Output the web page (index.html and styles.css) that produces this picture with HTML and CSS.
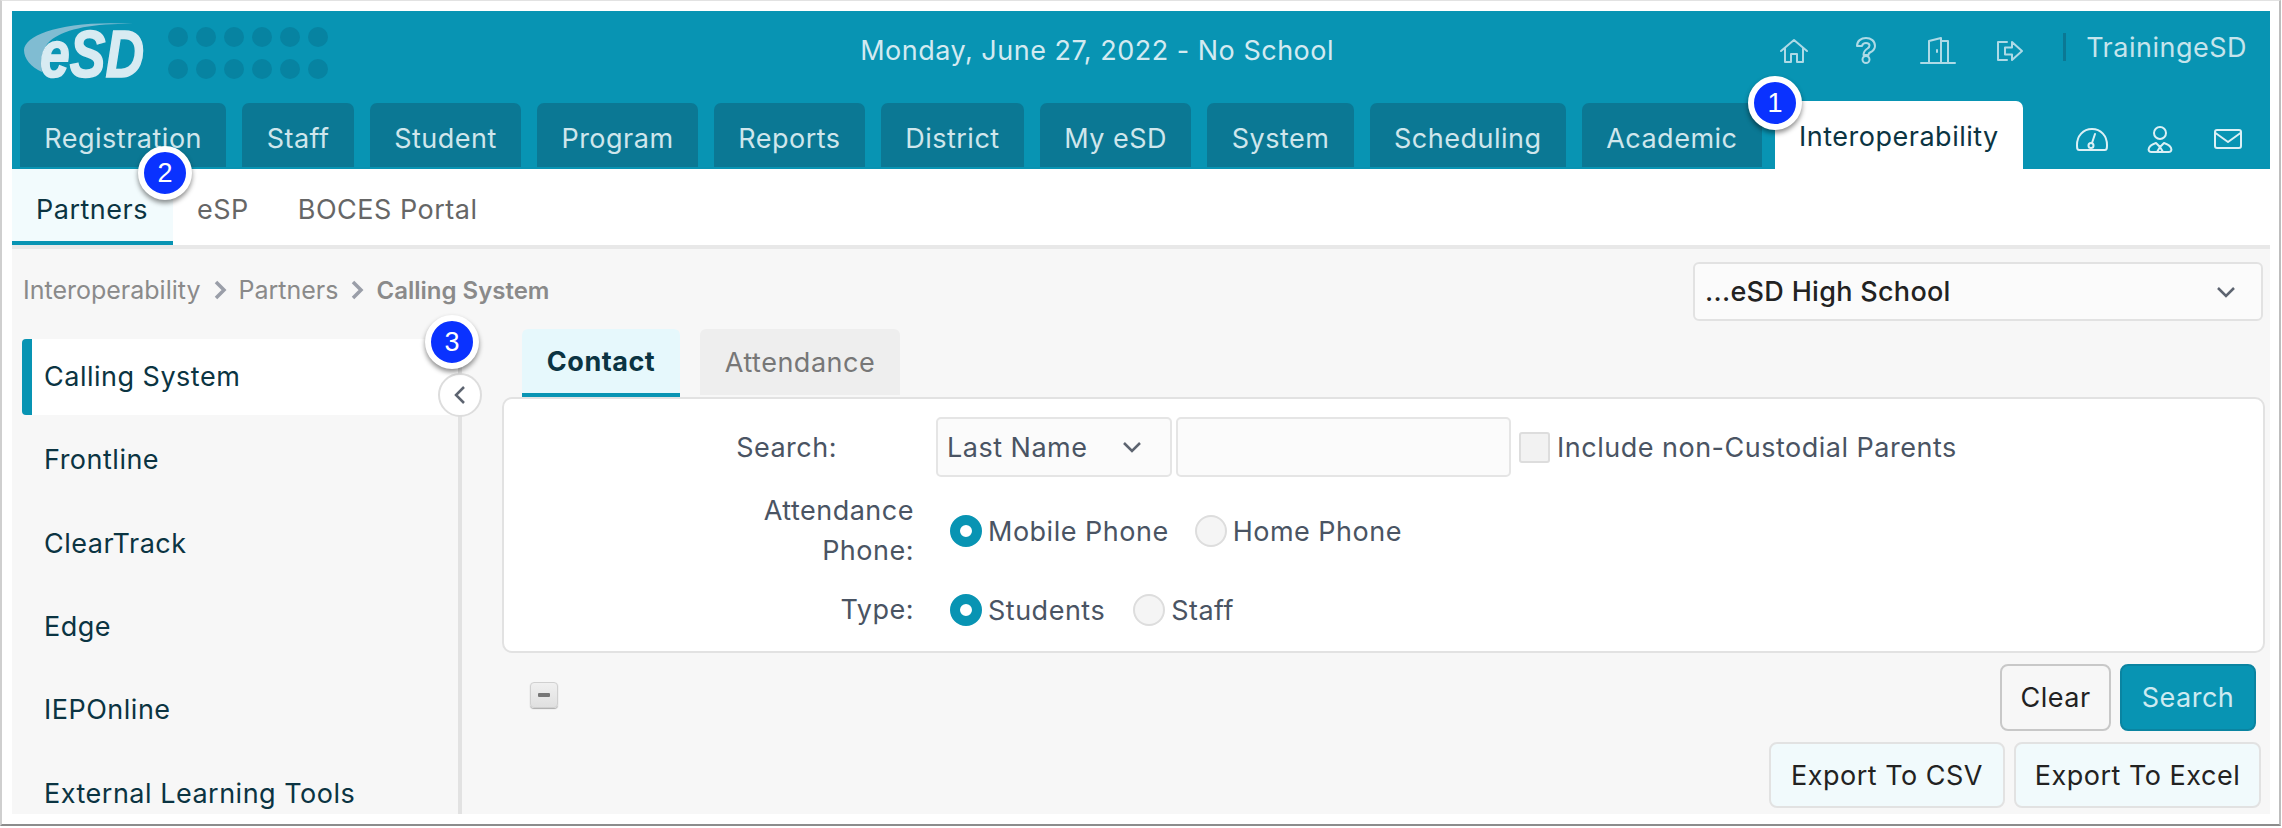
FILE: index.html
```html
<!DOCTYPE html>
<html lang="en">
<head>
    <meta charset="UTF-8">
    <title>Calling System</title>
    <link rel="stylesheet" href="styles.css">
</head>
<body>
<div class="frame">
    <header class="top-header">
        <div class="header-top">
            <div class="logo">
                <svg width="130" height="72" viewBox="0 0 130 72">
                    <path class="logo-swoosh" d="M19 55 C8 50 1 42 1 33 C2 18 40 3 110 7 C70 6 40 12 27 24 C20 30 17 42 19 55 Z"/>
                </svg>
                <span class="logo-text">eSD</span>
            </div>
            <div class="dots">
                <span></span><span></span><span></span><span></span><span></span><span></span>
                <span></span><span></span><span></span><span></span><span></span><span></span>
            </div>
            <div class="today">Monday, June 27, 2022 - No School</div>
            <div class="top-icons">
                <svg class="line-icon" width="28" height="24" viewBox="0 0 28 24"><path d="M1 12 L14 1 L27 12 M5 9 V23 H11 V15 H17 V23 H23 V9"/></svg>
                <svg class="line-icon" width="20" height="27" viewBox="0 0 20 27"><path d="M1 9 C1 4 5 1 10 1 C15 1 19 4 19 9 C19 12 17 14 14 15.500 C13 16 12.500 17 12.500 18 H7.500 C7.500 15 9 13 11.500 11.500 C13 10.500 13.500 10 13.500 8.500 C13.500 7 12 6 10 6 C8 6 6.500 7 6 9 Z"/><circle cx="10" cy="22.500" r="3.500"/></svg>
                <svg class="line-icon" width="34" height="27" viewBox="0 0 34 27"><path d="M0 26 H34 M8 26 V4 L20 1 V26 M20 4 H27 V26 M16 13 V15"/></svg>
                <svg class="line-icon" width="26" height="20" viewBox="0 0 26 20"><path d="M10 1 H1 V19 H10 M8 6.500 H15 V1 L25 10 L15 19 V13.500 H8 Z"/></svg>
            </div>
            <div class="divider"></div>
            <div class="user">TrainingeSD</div>
        </div>
        <div class="header-tabs">
            <nav class="main-tabs">
                <a class="main-tab">Registration</a>
                <a class="main-tab">Staff</a>
                <a class="main-tab">Student</a>
                <a class="main-tab">Program</a>
                <a class="main-tab">Reports</a>
                <a class="main-tab">District</a>
                <a class="main-tab">My eSD</a>
                <a class="main-tab">System</a>
                <a class="main-tab">Scheduling</a>
                <a class="main-tab">Academic</a>
                <a class="main-tab active">Interoperability</a>
            </nav>
            <div class="tab-icons">
                <svg class="line-icon bright" width="32" height="23" viewBox="0 0 32 23"><path d="M3 22 H29 C31 22 31 20 31 17 C31 8 25 1 16 1 C7 1 1 8 1 17 C1 20 1 22 3 22 Z M16 15 L19 6"/><circle cx="15" cy="17.500" r="2.500"/></svg>
                <svg class="line-icon bright" width="24" height="27" viewBox="0 0 24 27"><circle cx="12" cy="7" r="6"/><path d="M3 26 C1 26 0 24 1 22 C2 19 5 18 8 17 L12 21 L16 17 C19 18 22 19 23 22 C24 24 23 26 21 26 Z M12 21 L9 26 M12 21 L15 26"/></svg>
                <svg class="line-icon bright" width="28" height="20" viewBox="0 0 28 20"><rect x="1" y="1" width="26" height="18" rx="2"/><path d="M1.500 4 L14 13 L26.500 4"/></svg>
            </div>
        </div>
    </header>

    <nav class="sub-nav">
        <a class="sub-tab active">Partners</a>
        <a class="sub-tab">eSP</a>
        <a class="sub-tab">BOCES Portal</a>
    </nav>

    <div class="content">
        <div class="crumb-row">
            <div class="crumbs">
                <span>Interoperability</span>
                <svg class="crumb-sep" width="16" height="22" viewBox="0 0 16 22"><path d="M4 3 L12 11 L4 19"/></svg>
                <span>Partners</span>
                <svg class="crumb-sep" width="16" height="22" viewBox="0 0 16 22"><path d="M4 3 L12 11 L4 19"/></svg>
                <strong>Calling System</strong>
            </div>
            <div class="school-select">
                <span>...eSD High School</span>
                <svg class="chevron" width="22" height="14" viewBox="0 0 22 14"><path d="M3 3 L11 11 L19 3"/></svg>
            </div>
        </div>

        <div class="columns">
            <aside class="side-menu">
                <a class="side-item active">Calling System</a>
                <a class="side-item">Frontline</a>
                <a class="side-item">ClearTrack</a>
                <a class="side-item">Edge</a>
                <a class="side-item">IEPOnline</a>
                <a class="side-item">External Learning Tools</a>
                <div class="collapse-btn">
                    <svg width="14" height="22" viewBox="0 0 14 22"><path d="M11 3 L3 11 L11 19"/></svg>
                </div>
            </aside>

            <main class="main-col">
                <div class="inner-tabs">
                    <a class="inner-tab active">Contact</a>
                    <a class="inner-tab">Attendance</a>
                </div>
                <section class="panel">
                    <div class="form-row search-row">
                        <label class="search-label">Search:</label>
                        <div class="field-select">
                            <span>Last Name</span>
                            <svg class="chevron" width="22" height="14" viewBox="0 0 22 14"><path d="M3 3 L11 11 L19 3"/></svg>
                        </div>
                        <div class="field-input"></div>
                        <span class="checkbox"></span>
                        <span class="opt-text">Include non-Custodial Parents</span>
                    </div>
                    <div class="form-row phone-row">
                        <label class="form-label">Attendance<br>Phone:</label>
                        <span class="radio on"></span>
                        <span class="opt-text">Mobile Phone</span>
                        <span class="radio second"></span>
                        <span class="opt-text">Home Phone</span>
                    </div>
                    <div class="form-row type-row">
                        <label class="form-label">Type:</label>
                        <span class="radio on"></span>
                        <span class="opt-text">Students</span>
                        <span class="radio second"></span>
                        <span class="opt-text">Staff</span>
                    </div>
                </section>
                <div class="actions">
                    <span class="minus-btn"><i></i></span>
                    <button class="btn btn-clear">Clear</button>
                    <button class="btn btn-search">Search</button>
                </div>
                <div class="exports">
                    <button class="btn btn-export">Export To CSV</button>
                    <button class="btn btn-export">Export To Excel</button>
                </div>
            </main>
        </div>
    </div>

    <span class="badge badge-1">1</span>
    <span class="badge badge-2">2</span>
    <span class="badge badge-3">3</span>
</div>
</body>
</html>
```

FILE: styles.css
```css
* {
    box-sizing: border-box;
}
html, body {
    margin: 0;
    height: 828px;
    overflow: hidden;
    background: #fff;
}
body {
    font-family: Inter, "Noto Sans", sans-serif;
    font-size: 27px;
    letter-spacing: 0.5px;
    color: #4a5463;
}
.frame {
    position: relative;
    width: 2281px;
    height: 826px;
    padding: 10px 9px 10px 10px;
    border: 1px solid #e2e2e2;
    border-left: 2px solid #cfcfcf;
    border-right: 2px solid #bdbdbd;
    border-bottom: 2px solid #8c8c8c;
    background: #fff;
    display: flex;
    flex-direction: column;
}

/* header */
.top-header {
    height: 158px;
    background: #0894b3;
    display: flex;
    flex-direction: column;
    flex-shrink: 0;
}
.header-top {
    height: 90px;
    display: flex;
    align-items: flex-start;
    position: relative;
}
.logo {
    position: relative;
    width: 130px;
    height: 72px;
    margin: 6px 0 0 11px;
    flex-shrink: 0;
}
.logo-swoosh {
    fill: #80bcd2;
}
.logo-text {
    position: absolute;
    left: 17px;
    top: 4px;
    font-family: "Liberation Sans", sans-serif;
    font-weight: bold;
    font-style: italic;
    font-size: 66px;
    line-height: 66px;
    letter-spacing: 0;
    color: #d8ebf2;
    -webkit-text-stroke: 1.6px #d8ebf2;
    transform: scaleX(0.81);
    transform-origin: left center;
}
.dots {
    display: grid;
    grid-template-columns: repeat(6, 20px);
    gap: 12px 8px;
    margin: 16px 0 0 15px;
}
.dots span {
    width: 20px;
    height: 20px;
    border-radius: 50%;
    background: #0783a1;
}
.today {
    flex: 1;
    text-align: center;
    margin-top: 23px;
    padding-left: 108px;
    color: #d3eaf1;
}
.line-icon {
    fill: none;
    stroke: #aedae6;
    stroke-width: 2;
    stroke-linejoin: round;
    stroke-linecap: round;
    flex-shrink: 0;
    overflow: visible;
}
.line-icon.bright {
    stroke: #dcf0f5;
}
.top-icons {
    display: grid;
    grid-auto-flow: column;
    grid-auto-columns: 72px;
    justify-items: center;
    align-items: center;
    height: 27px;
    margin-top: 26px;
}
.divider {
    width: 3px;
    height: 28px;
    background: #0b7894;
    margin: 22px 0 0 17px;
}
.user {
    color: #c6e4ec;
    margin: 20px 23px 0 20px;
}
.header-tabs {
    flex: 1;
    display: flex;
    justify-content: space-between;
}
.main-tabs {
    display: flex;
    gap: 16px;
    padding-left: 8px;
    align-items: flex-start;
}
.main-tab {
    height: 64px;
    margin-top: 2px;
    padding: 9px 24.3px 0;
    background: #0b7894;
    border-radius: 7px 7px 0 0;
    color: #cfe6ec;
    line-height: 54px;
}
.main-tab.active {
    height: 68px;
    margin: 0 0 0 -3px;
    background: #fff;
    color: #0b3442;
}
.tab-icons {
    display: grid;
    grid-auto-flow: column;
    grid-auto-columns: 68px;
    justify-items: center;
    align-items: center;
    padding: 8px 8px 0 0;
}

/* sub nav */
.sub-nav {
    height: 76px;
    display: flex;
    flex-shrink: 0;
}
.sub-tab {
    padding: 0 25px 0 24px;
    line-height: 81px;
    color: #666;
}
.sub-tab.active {
    background: #f2fbfd;
    color: #0b3442;
    border-bottom: 4px solid #0894b3;
}

/* content */
.content {
    flex: 1;
    min-height: 0;
    background: #f7f7f7;
    border-top: 4px solid #e8e8e8;
    overflow: hidden;
}
.crumb-row {
    height: 90px;
    display: flex;
    justify-content: space-between;
    align-items: flex-start;
    padding: 13px 7px 0 11px;
}
.crumbs {
    display: flex;
    align-items: center;
    gap: 11px;
    margin-top: 9px;
    font-size: 25px;
    letter-spacing: 0;
    color: #8a8a8a;
    height: 38px;
}
.crumbs strong {
    font-size: 24px;
    font-weight: 600;
}
.crumb-sep {
    fill: none;
    stroke: #9a9ea8;
    stroke-width: 3.5;
}
.chevron {
    fill: none;
    stroke: #5d6470;
    stroke-width: 2.500;
}
.school-select {
    width: 570px;
    height: 59px;
    display: flex;
    align-items: center;
    justify-content: space-between;
    padding: 0 24px 0 10px;
    background: #fbfbfb;
    border: 2px solid #e2e2e2;
    border-radius: 6px;
    font-weight: 500;
    letter-spacing: 0.3px;
    color: #222;
}
.columns {
    display: flex;
}
.side-menu {
    position: relative;
    width: 450px;
    height: 500px;
    padding-left: 10px;
    border-right: 4px solid #e2e2e2;
    flex-shrink: 0;
}
.side-item {
    display: flex;
    align-items: center;
    height: 83.4px;
    padding-left: 22px;
    color: #0b3442;
}
.side-item.active {
    height: 76px;
    margin-bottom: 3px;
    background: #fff;
    border-left: 10px solid #0894b3;
    border-radius: 4px 0 0 4px;
    padding: 0 0 2px 12px;
}
.collapse-btn {
    position: absolute;
    top: 34px;
    right: -24px;
    width: 44px;
    height: 44px;
    display: flex;
    align-items: center;
    justify-content: center;
    background: #fff;
    border: 2px solid #ddd;
    border-radius: 50%;
}
.collapse-btn svg {
    fill: none;
    stroke: #5d6470;
    stroke-width: 2.500;
}
.main-col {
    flex: 1;
    padding-left: 40px;
    margin-top: -10px;
}
.inner-tabs {
    display: flex;
    gap: 20px;
    padding-left: 20px;
}
.inner-tab {
    height: 68px;
    width: 158px;
    text-align: center;
    line-height: 66px;
    background: #e6f8fc;
    border-bottom: 4px solid #0894b3;
    border-radius: 6px 6px 0 0;
    color: #0b3442;
    font-weight: 700;
}
.inner-tab + .inner-tab {
    width: 200px;
    height: 66px;
    line-height: 67px;
    background: #eee;
    border-bottom: 0;
    color: #777;
    font-weight: 400;
}
.panel {
    width: 1763px;
    height: 256px;
    background: #fff;
    border: 2px solid #e2e2e2;
    border-radius: 10px;
    position: relative;
}
.form-row {
    display: flex;
    align-items: center;
    position: relative;
}
.search-row {
    height: 60px;
    margin-top: 18px;
}
.phone-row {
    height: 80px;
    margin-top: 14px;
}
.type-row {
    height: 40px;
    margin-top: 19px;
}
.search-label {
    width: 333px;
    text-align: right;
    margin-right: 99px;
}
.form-label {
    width: 410px;
    text-align: right;
    margin-right: 36px;
    line-height: 40px;
}
.field-select {
    width: 236px;
    height: 60px;
    display: flex;
    align-items: center;
    justify-content: space-between;
    padding: 0 27px 0 9px;
    background: #fbfbfb;
    border: 2px solid #e5e5e5;
    border-radius: 5px;
}
.field-input {
    width: 335px;
    height: 60px;
    margin-left: 4px;
    background: #fbfbfb;
    border: 2px solid #e5e5e5;
    border-radius: 5px;
}
.checkbox {
    width: 31px;
    height: 31px;
    margin: 0 7px 0 8px;
    background: #f2f2f2;
    border: 2px solid #ddd;
    border-radius: 3px;
}
.opt-text {
    color: #4a5463;
}
.radio {
    width: 32px;
    height: 32px;
    margin-right: 6px;
    border-radius: 50%;
    background: #f5f5f5;
    border: 2px solid #ddd;
    flex-shrink: 0;
}
.radio.on {
    background: #fff;
    border: 10px solid #0894b3;
}
.radio.second {
    margin-left: 26px;
}
.type-row .radio.second {
    margin-left: 28px;
}
.actions {
    display: flex;
    align-items: center;
    gap: 9px;
    width: 1754px;
    margin-top: 11px;
}
.minus-btn {
    width: 28px;
    height: 26px;
    margin: 0 auto 6px 28px;
    display: flex;
    align-items: center;
    justify-content: center;
    background: linear-gradient(#f0f0f0, #e0e0e0);
    border: 1px solid #d0d0d0;
    border-radius: 4px;
    box-shadow: 0 1px 1px #aaa;
}
.minus-btn i {
    width: 12px;
    height: 4px;
    background: #777;
    border-radius: 1px;
}
.btn {
    height: 67px;
    padding: 0;
    border-radius: 8px;
    font-family: Inter, "Noto Sans", sans-serif;
    font-size: 27px;
    letter-spacing: 0.5px;
}
.btn-clear {
    width: 111px;
    background: #f7f7f7;
    border: 2px solid #c8c8c8;
    color: #222;
}
.btn-search {
    width: 136px;
    background: #0894b3;
    border: 2px solid #0a84a1;
    color: #cdeaf1;
}
.exports {
    display: flex;
    justify-content: flex-end;
    gap: 9px;
    width: 1759px;
    margin-top: 11px;
}
.btn-export {
    width: 236px;
    height: 66px;
    background: #f1fafc;
    border: 2px solid #e2e2e2;
    color: #222;
}
.btn-export + .btn-export {
    width: 247px;
}

/* numbered callouts over the page */
.badge {
    position: absolute;
    width: 54px;
    height: 54px;
    display: flex;
    align-items: center;
    justify-content: center;
    background: #0a32ff;
    border: 6px solid #fff;
    border-radius: 50%;
    box-shadow: 0 3px 5px rgba(0, 0, 0, 0.45);
    color: #fff;
    font-family: "Liberation Sans", sans-serif;
    font-size: 27px;
    letter-spacing: 0;
    z-index: 5;
}
.badge-1 {
    left: 1746px;
    top: 75px;
}
.badge-2 {
    left: 136px;
    top: 145px;
}
.badge-3 {
    left: 423px;
    top: 314px;
}
```
